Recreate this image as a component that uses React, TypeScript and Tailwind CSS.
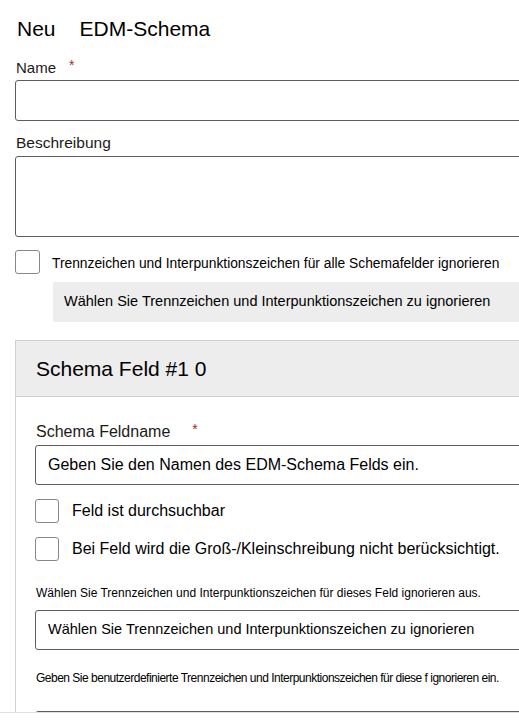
export default function App() {
  return (
    <div className="w-[519px] h-[725px] overflow-hidden bg-white text-[#1b1a19] font-['Liberation_Sans',Arial,sans-serif]">
      <div className="h-[713px] overflow-hidden border-b border-[#e1dfdd]">
        <div className="w-[580px] pl-[15px] pt-[15px]">
          <h1 className="flex h-[28px] items-center pl-[2px] text-[21px] font-normal leading-[28px] text-black">
            <span>Neu</span>
            <span className="ml-[24px]">EDM-Schema</span>
          </h1>

          <label className="mt-[12px] block h-[20px] pl-[1px] text-[15px] leading-[20px]">
            Name
            <span className="ml-[13px] align-[3px] text-[14px] text-[#a4262c]">*</span>
          </label>
          <input type="text" className="mt-[5px] block h-[41px] w-full rounded-[3px] border border-[#605e5c] bg-white px-3 text-[16px] outline-none" />

          <label className="mt-[12px] block h-[20px] pl-[1px] text-[15.5px] leading-[20px]">Beschreibung</label>
          <textarea className="mt-[3px] block h-[81px] w-full resize-none rounded-[3px] border border-[#605e5c] bg-white px-3 py-2 text-[16px] outline-none" />

          <div className="mt-[13px] flex items-center">
            <span className="h-[24px] w-[25px] shrink-0 rounded-[3px] border border-[#8a8886] bg-white" />
            <span className="ml-[12px] mt-[3px] text-[13.8px] leading-[18px] text-black">
              Trennzeichen und Interpunktionszeichen für alle Schemafelder ignorieren
            </span>
          </div>
          <div className="ml-[38px] mt-[8px] flex h-[40px] items-center rounded-[2px] bg-[#ededed] pl-[11px] text-[14.5px] text-black">
            Wählen Sie Trennzeichen und Interpunktionszeichen zu ignorieren
          </div>

          <section className="mt-[18px] border-l border-t border-[#d2d0ce]">
            <div className="flex h-[56px] items-center border-b border-[#d2d0ce] bg-[#ededed] pl-[20px] text-[21px] text-black">
              Schema Feld #1 0
            </div>
            <div className="pb-10 pl-[19px] pt-[22px]">
              <label className="block h-[20px] pl-[1px] text-[16px] leading-[20px]">
                Schema Feldname
                <span className="ml-[22px] align-[3px] text-[14px] text-[#a4262c]">*</span>
              </label>
              <div className="mt-[6px] flex h-[40px] items-center rounded-[3px] border border-[#605e5c] pl-[12px] text-[16px] text-black">
                Geben Sie den Namen des EDM-Schema Felds ein.
              </div>

              <div className="mt-[14px] flex items-center">
                <span className="h-[24px] w-[24px] shrink-0 rounded-[3px] border border-[#8a8886] bg-white" />
                <span className="ml-[13px] text-[16px] text-black">Feld ist durchsuchbar</span>
              </div>
              <div className="mt-[14px] flex items-center">
                <span className="h-[24px] w-[24px] shrink-0 rounded-[3px] border border-[#8a8886] bg-white" />
                <span className="ml-[13px] text-[16px] text-black">
                  Bei Feld wird die Groß-/Kleinschreibung nicht berücksichtigt.
                </span>
              </div>

              <p className="mt-[24px] h-[16px] pl-[1px] text-[12px] leading-[16px] text-black">
                Wählen Sie Trennzeichen und Interpunktionszeichen für dieses Feld ignorieren aus.
              </p>
              <div className="mt-[9px] flex h-[40px] items-center rounded-[3px] border border-[#605e5c] pl-[12px] text-[14.5px] text-black">
                Wählen Sie Trennzeichen und Interpunktionszeichen zu ignorieren
              </div>

              <p className="mt-[20px] h-[16px] pl-[1px] text-[12px] leading-[16px] tracking-[-0.5px] text-black">
                Geben Sie benutzerdefinierte Trennzeichen und Interpunktionszeichen für diese f ignorieren ein.
              </p>
              <div className="mt-[25px] h-[40px] rounded-[3px] border border-[#605e5c]" />
            </div>
          </section>
        </div>
      </div>
    </div>
  );
}
